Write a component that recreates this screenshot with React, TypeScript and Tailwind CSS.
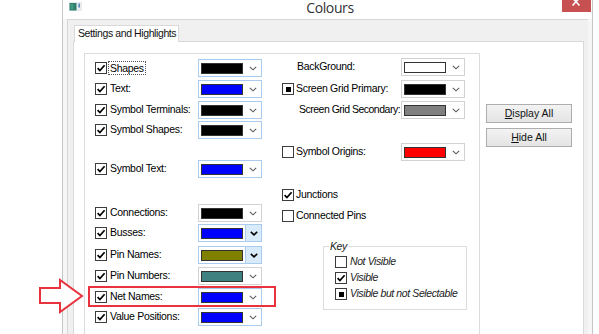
import React from 'react';

type BoxState = 'on' | 'off' | 'ind';

function Box({ state }: { state: BoxState }) {
  return (
    <span className="w-[12px] h-[12px] border border-[#3c3c3c] bg-white flex items-center justify-center shrink-0">
      {state === 'on' && (
        <svg width="10" height="10" viewBox="0 0 10 10">
          <path d="M1.6 5.2 L3.9 7.6 L8.6 2.2" fill="none" stroke="#000" strokeWidth="1.7" />
        </svg>
      )}
      {state === 'ind' && <span className="w-[5px] h-[5px] bg-black" />}
    </span>
  );
}

function Chevron({ bold }: { bold?: boolean }) {
  return (
    <svg width="8" height="5" viewBox="0 0 8 5">
      <path d="M0.8 0.8 L4 3.8 L7.2 0.8" fill="none" stroke={bold ? '#000' : '#5a5a5a'} strokeWidth={bold ? 1.6 : 1.1} />
    </svg>
  );
}

function Combo({ swatch, hot, gray }: { swatch: string; hot?: boolean; gray?: boolean }) {
  return (
    <div
      className={`w-[64px] h-[18px] border bg-white flex items-stretch shrink-0 ${
        gray ? 'border-[#d2d2d2]' : 'border-[#a9cbee]'
      }`}
    >
      <div className="flex items-center pl-[2px]">
        <div className={`w-[42px] h-[11px] border border-[#333] ${swatch}`} />
      </div>
      <div
        className={`flex-1 flex items-center justify-center ml-[2px] ${
          hot ? 'bg-[#d9eafb] border-l border-[#a9cbee]' : ''
        }`}
      >
        <Chevron bold={hot} />
      </div>
    </div>
  );
}

type LeftRow = {
  label: string;
  sw: string;
  mt: string;
  hot?: boolean;
  gray?: boolean;
  focus?: boolean;
};

const leftRows: LeftRow[] = [
  { label: 'Shapes:', sw: 'bg-black', mt: 'mt-[4px]', focus: true },
  { label: 'Text:', sw: 'bg-[#0000ff]', mt: 'mt-[1px]' },
  { label: 'Symbol Terminals:', sw: 'bg-black', mt: 'mt-[1px]' },
  { label: 'Symbol Shapes:', sw: 'bg-black', mt: 'mt-0' },
  { label: 'Symbol Text:', sw: 'bg-[#0000ff]', mt: 'mt-[19px]' },
  { label: 'Connections:', sw: 'bg-black', mt: 'mt-[24px]', gray: true },
  { label: 'Busses:', sw: 'bg-[#0000ff]', mt: 'mt-0', hot: true },
  { label: 'Pin Names:', sw: 'bg-[#808000]', mt: 'mt-[2px]', hot: true },
  { label: 'Pin Numbers:', sw: 'bg-[#3f8080]', mt: 'mt-[1px]', gray: true },
  { label: 'Net Names:', sw: 'bg-[#0000ff]', mt: 'mt-[1px]' },
  { label: 'Value Positions:', sw: 'bg-[#0000ff]', mt: 'mt-0' },
];

function KeyRow({ state, label }: { state: BoxState; label: string }) {
  return (
    <div className="h-[16px] flex items-center">
      <Box state={state} />
      <span className="ml-[3px] italic text-[#222] whitespace-nowrap">{label}</span>
    </div>
  );
}

export default function App() {
  return (
    <div className="relative w-[599px] h-[334px] overflow-hidden bg-white flex font-['Liberation_Sans',Arial,sans-serif] text-[10.5px] tracking-[-0.3px] text-black">
      {/* Window */}
      <div className="ml-[62px] w-[531px] h-[334px] border-l border-r border-[#c6c6c6] flex flex-col bg-[#f6f6f6]">
        {/* Title bar */}
        <div className="h-[19px] bg-white flex items-start shrink-0">
          <div className="pl-[6px] pt-[2px] shrink-0">
            <svg width="13" height="9" viewBox="0 0 13 9">
              <rect x="0" y="0" width="13" height="9" fill="#e9ecec" />
              <rect x="0.5" y="1" width="7" height="7.5" fill="#2f7f6c" />
              <rect x="1.5" y="2" width="3" height="5.5" fill="#3f9a82" />
              <rect x="9.5" y="1.5" width="1.3" height="4" fill="#3b6fb3" />
            </svg>
          </div>
          <div className="flex-1 text-center pl-[16px] font-['Open_Sans',sans-serif] text-[14px] leading-[16px] tracking-[-0.4px] text-[#333]">
            Colours
          </div>
          <div className="w-[29px] h-[12px] bg-[#c75050] mr-[1px] shrink-0">
            <svg width="29" height="12" viewBox="0 0 29 12">
              <path d="M10.5 -2 L17.5 5.5 M17.5 -2 L10.5 5.5" stroke="#fff" strokeWidth="1.6" />
            </svg>
          </div>
        </div>

        {/* Frame body */}
        <div className="flex-1 flex pl-[4px] pr-[4px]">
          <div className="flex-1 border-l border-t border-[#d6d6d6] bg-[#f0f0f0] pl-[5px] pt-[5px] flex flex-col">
            {/* Tab header */}
            <div className="ml-[1px] w-[105px] h-[17px] border-t border-l border-r border-[#d9d9d9] bg-white flex items-center pl-[3px] text-[#111] relative z-10 -mb-[1px] whitespace-nowrap tracking-[-0.4px]">
              Settings and Highlights
            </div>
            {/* Tab page */}
            <div className="w-[511px] flex-1 border border-[#d9d9d9] bg-white flex pl-[10px] pt-[11px]">
              {/* Group box */}
              <div className="w-[396px] h-[300px] border border-[#dcdcdc] flex shrink-0">
                {/* Left column */}
                <div className="w-[197px] pl-[10px] flex flex-col">
                  {leftRows.map((r) => (
                    <div key={r.label} className={`h-[20px] flex items-center ${r.mt}`}>
                      <Box state="on" />
                      <div className="ml-[2px] w-[89px] shrink-0 flex items-center whitespace-nowrap">
                        {r.focus ? (
                          <span className="outline outline-1 outline-dotted outline-[#555] px-[1px] leading-[12px]">
                            {r.label.replace(':', '')}
                          </span>
                        ) : (
                          <span className="pl-[1px]">{r.label}</span>
                        )}
                      </div>
                      <Combo swatch={r.sw} hot={r.hot} gray={r.gray} />
                    </div>
                  ))}
                </div>

                {/* Right column */}
                <div className="flex-1 flex flex-col whitespace-nowrap">
                  <div className="h-[20px] mt-[3px] flex items-center">
                    <span className="w-[15px] shrink-0" />
                    <span className="w-[104px] shrink-0">BackGround:</span>
                    <Combo swatch="bg-white" gray />
                  </div>
                  <div className="h-[20px] mt-[2px] flex items-center">
                    <Box state="ind" />
                    <span className="ml-[2px] w-[105px] shrink-0">Screen Grid Primary:</span>
                    <Combo swatch="bg-black" gray />
                  </div>
                  <div className="h-[20px] mt-[1px] flex items-center">
                    <span className="w-[17px] shrink-0" />
                    <span className="w-[102px] shrink-0 tracking-[-0.5px]">Screen Grid Secondary:</span>
                    <Combo swatch="bg-[#808080]" gray />
                  </div>
                  <div className="h-[20px] mt-[22px] flex items-center">
                    <Box state="off" />
                    <span className="ml-[2px] w-[105px] shrink-0">Symbol Origins:</span>
                    <Combo swatch="bg-[#ff0000]" gray />
                  </div>
                  <div className="h-[20px] mt-[23px] flex items-center">
                    <Box state="on" />
                    <span className="ml-[2px]">Junctions</span>
                  </div>
                  <div className="h-[20px] mt-[1px] flex items-center">
                    <Box state="off" />
                    <span className="ml-[2px]">Connected Pins</span>
                  </div>

                  {/* Key box */}
                  <div className="relative mt-[20px] ml-[41px] w-[144px] h-[64px] border border-[#dcdcdc] pl-[11px] pt-[7px] flex flex-col tracking-[-0.4px]">
                    <span className="absolute -top-[7px] left-[5px] px-[1px] bg-white italic text-[#222] leading-[12px]">
                      Key
                    </span>
                    <KeyRow state="off" label="Not Visible" />
                    <KeyRow state="on" label="Visible" />
                    <KeyRow state="ind" label="Visible but not Selectable" />
                  </div>
                </div>
              </div>

              {/* Buttons */}
              <div className="ml-[6px] mt-[51px] flex flex-col gap-[5px] tracking-normal text-[10.5px]">
                <button className="w-[86px] h-[19px] border border-[#adadad] bg-gradient-to-b from-[#f3f3f3] to-[#e4e4e4] text-[#111] flex items-center justify-center">
                  <span>
                    <span className="underline">D</span>isplay All
                  </span>
                </button>
                <button className="w-[86px] h-[19px] border border-[#adadad] bg-gradient-to-b from-[#f3f3f3] to-[#e4e4e4] text-[#111] flex items-center justify-center">
                  <span>
                    <span className="underline">H</span>ide All
                  </span>
                </button>
              </div>
            </div>
          </div>
        </div>
      </div>

      {/* Annotation: red highlight around Net Names row */}
      <div className="absolute left-[88px] top-[286px] w-[188px] h-[21px] border-2 border-[#e8323c]" />
      {/* Annotation: outline arrow */}
      <svg className="absolute left-0 top-0" width="120" height="334" viewBox="0 0 120 334">
        <polygon
          points="40,288 60,288 60,280 82,296 60,312 60,303 40,303"
          fill="#fff"
          stroke="#e8323c"
          strokeWidth="2"
          strokeLinejoin="miter"
        />
      </svg>
    </div>
  );
}
